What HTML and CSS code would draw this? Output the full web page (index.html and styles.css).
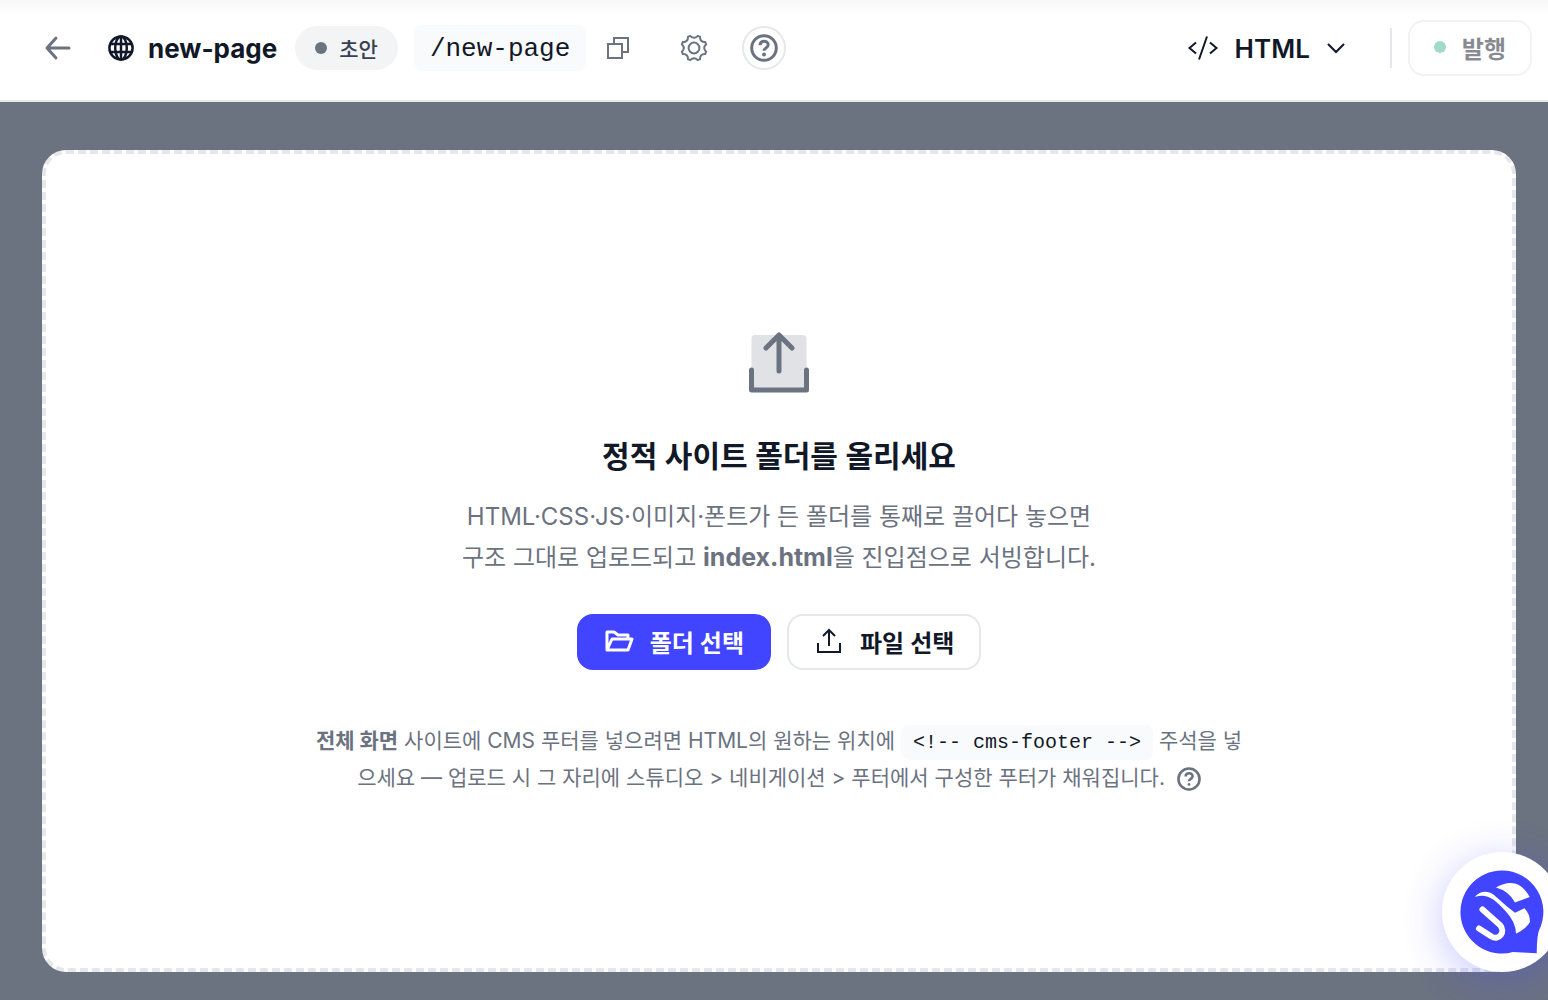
FILE: index.html
```html
<!DOCTYPE html>
<html lang="ko">
<head>
  <meta charset="UTF-8" />
  <meta name="viewport" content="width=device-width, initial-scale=1.0"/>
  <title>new-page</title>
  <link rel="stylesheet" href="styles.css">
</head>
<body>

  <header class="topbar">
    <a class="back" href="#" aria-label="뒤로">
      <svg width="28" height="28" viewBox="0 0 28 28"><path d="M25 14H3M12 4L3 14l9 10"/></svg>
    </a>

    <h1 class="page-title">
      <svg width="26" height="26" viewBox="0 0 26 26"><circle cx="13" cy="13" r="11.6"/><ellipse cx="13" cy="13" rx="5.8" ry="11.6"/><path d="M2.5 9h21M2.5 17h21M13 1v24"/></svg>
      new-page
    </h1>

    <span class="badge"><i class="dot"></i>초안</span>
    <code class="slug">/new-page</code>

    <button class="icon-btn copy" type="button" aria-label="주소 복사">
      <svg width="24" height="24" viewBox="0 0 24 24"><path d="M2 8h14v14H2zM8 8V2h14v14h-6"/></svg>
    </button>
    <button class="icon-btn settings" type="button" aria-label="설정">
      <svg width="28" height="28" viewBox="0 0 28 28"><circle cx="14" cy="14" r="5.4"/><path d="M10.2 1.900Q14 5.700 17.800 1.900L20 2.800Q19.800 8.200 25.200 8L26.100 10.200Q22.300 14 26.100 17.800L25.200 20Q19.800 19.800 20 25.200L17.800 26.100Q14 22.300 10.200 26.100L8 25.200Q8.200 19.800 2.800 20L1.900 17.800Q5.700 14 1.900 10.200L2.800 8Q8.200 8.200 8 2.800z"/></svg>
    </button>
    <button class="icon-btn help" type="button" aria-label="도움말">
      <svg width="28" height="28" viewBox="0 0 28 28"><circle cx="14" cy="14" r="12.3"/><path d="M10 11.2c0-5.3 8.2-5.1 8.2-.4 0 3.2-4.2 3-4.2 5.9"/><circle class="fill" cx="14" cy="20.4" r="2"/></svg>
    </button>

    <button class="mode" type="button">
      <svg width="32" height="28" viewBox="0 0 32 28"><path d="M9 8.5L2.500 14 9 19.500M23 8.500l6.500 5.500-6.500 5.500M20 2.500l-8 23"/></svg>
      HTML
      <svg width="20" height="20" viewBox="0 0 20 20"><path d="M2 6l8 8 8-8"/></svg>
    </button>
    <span class="divider"></span>
    <button class="publish" type="button" disabled><i class="dot"></i>발행</button>
  </header>

  <main class="stage">
    <section class="dropzone">
      <svg class="upload" width="64" height="64" viewBox="0 0 64 64">
        <rect x="4.500" y="5" width="55" height="56" rx="4"/>
        <path d="M32 41V6M19 18L32 5l13 13M4.500 40v20h55V40"/>
      </svg>
      <h2>정적 사이트 폴더를 올리세요</h2>
      <p class="lead">HTML·CSS·JS·이미지·폰트가 든 폴더를 통째로 끌어다 놓으면<br>구조 그대로 업로드되고 <strong>index.html</strong>을 진입점으로 서빙합니다.</p>

      <div class="actions">
        <button class="btn primary" type="button">
          <svg width="30" height="24" viewBox="0 0 30 24"><path d="M3 21V3h7l4 3h10v4M3 21L8 10h20l-4 11z"/></svg>
          폴더 선택
        </button>
        <button class="btn" type="button">
          <svg width="30" height="28" viewBox="0 0 30 28"><path d="M15 19V3M9 9l6-6 6 6M4 16v9h22v-9"/></svg>
          파일 선택
        </button>
      </div>

      <p class="note">
        <strong>전체 화면</strong> 사이트에 CMS 푸터를 넣으려면 HTML의 원하는 위치에 <code>&lt;!-- cms-footer --&gt;</code> 주석을 넣으세요 — 업로드 시 그 자리에 스튜디오 &gt; 네비게이션 &gt; 푸터에서 구성한 푸터가 채워집니다.
        <button class="note-help" type="button" aria-label="푸터 도움말">
          <svg width="24" height="24" viewBox="0 0 28 28"><circle cx="14" cy="14" r="12.300"/><path d="M10 11.200c0-5.300 8.200-5.100 8.200-.4 0 3.200-4.200 3-4.200 5.900"/><circle class="fill" cx="14" cy="20.400" r="1.600"/></svg>
        </button>
      </p>
    </section>
  </main>

  <button class="chat" type="button" aria-label="채팅 문의">
    <svg width="120" height="120" viewBox="0 0 120 120">
      <path class="bubble" d="M60 18.500a41.500 41.500 0 0 1 37 60q-2 4-2.300 22.800L71 100A41.500 41.500 0 1 1 60 18.500z"/>
      <path class="mark" d="M54 35.500C67 28 79 29 87.700 45L73 50.500Q67 39 54 35.500z"/>
      <path class="mark" d="M33 45C38 38.500 46 38.500 52 43L65 54.500 73 60.700l9.500-4.500Q88 62 88 70 84 77 74 81.700 74 70 63 58.500C52 46 44 41 33 45z"/>
      <path class="hook" d="M40.500 57.500L58 73c6 7-1 16-8.500 11.500L37 76.500"/>
    </svg>
  </button>

</body>
</html>
```
FILE: styles.css
```css
* {
  box-sizing: border-box;
}
body {
  margin: 0;
  min-height: 100vh;
  display: flex;
  flex-direction: column;
  overflow: hidden;
  font-family: Inter, "Noto Sans CJK KR", sans-serif;
  background: #6b7280;
  color: #111827;
}
button {
  font: inherit;
  color: inherit;
  background: none;
  border: 0;
  padding: 0;
  cursor: pointer;
}
svg {
  display: block;
  flex: none;
  fill: none;
  stroke: currentColor;
  stroke-width: 2;
}
svg .fill {
  fill: currentColor;
  stroke: none;
}
code {
  font-family: "Liberation Mono", monospace;
  color: #111827;
  background: #f9fafb;
  border-radius: 8px;
}

.topbar {
  display: flex;
  align-items: center;
  height: 102px;
  padding: 0 16px 4px 44px;
  background: linear-gradient(#f7f7f7, #fff 14px);
  border-bottom: 2px solid #e5e7eb;
}
.back {
  color: #6b7280;
  margin-right: 36px;
}
.back svg {
  stroke-width: 3;
  stroke-linecap: round;
  stroke-linejoin: round;
}
.page-title {
  display: flex;
  align-items: center;
  gap: 14px;
  margin: 0 18px 0 0;
  font-size: 26px;
  font-weight: 700;
}
.page-title svg {
  stroke-width: 2.5;
}
.badge {
  display: flex;
  align-items: center;
  gap: 12px;
  height: 44px;
  padding: 0 20px;
  margin-right: 16px;
  border-radius: 22px;
  background: #f3f4f6;
  color: #374151;
  font-size: 21px;
  font-weight: 500;
}
.dot {
  width: 12px;
  height: 12px;
  border-radius: 50%;
  background: #6b7280;
}
.slug {
  padding: 2px 16px 0;
  font-size: 26px;
  line-height: 44px;
}
.icon-btn {
  display: flex;
  align-items: center;
  justify-content: center;
  width: 44px;
  height: 44px;
  color: #6b7280;
}
.copy {
  margin-left: 10px;
}
.settings {
  margin-left: 32px;
}
.help {
  margin-left: 26px;
  border: 2px solid #e5e7eb;
  border-radius: 50%;
}
.help svg {
  stroke-width: 3;
}
.mode {
  display: flex;
  align-items: center;
  gap: 16px;
  margin-left: auto;
  font-size: 26px;
  font-weight: 600;
}
.divider {
  width: 2px;
  height: 40px;
  margin: 0 16px 0 44px;
  background: #e5e7eb;
}
.publish {
  display: flex;
  align-items: center;
  gap: 16px;
  height: 56px;
  padding: 0 24px 2px;
  border: 2px solid #e5e7eb;
  border-radius: 16px;
  font-size: 24px;
  font-weight: 600;
  opacity: 0.5;
}
.publish .dot {
  background: #45b98a;
}

.stage {
  flex: 1;
  display: flex;
  padding: 48px 32px 28px 42px;
}
.dropzone {
  flex: 1;
  display: flex;
  flex-direction: column;
  align-items: center;
  justify-content: center;
  padding-top: 4px;
  border: 4px dashed #e5e7eb;
  border-radius: 24px;
  background: #fff;
  color: #6b7280;
  text-align: center;
}
.upload {
  stroke-width: 5;
  stroke-linecap: round;
  stroke-linejoin: round;
}
.upload rect {
  fill: #e1e2e6;
  stroke: none;
}
.dropzone h2 {
  margin: 38px 0 16px;
  font-size: 30px;
  line-height: 48px;
  font-weight: 600;
  color: #111827;
}
.lead {
  margin: 0;
  font-size: 24px;
  line-height: 41px;
}
.lead strong {
  font-size: 25px;
  font-weight: 700;
}
.actions {
  display: flex;
  gap: 16px;
  margin: 36px 0 52px;
}
.btn {
  display: flex;
  align-items: center;
  gap: 16px;
  height: 56px;
  padding: 0 25px 2px;
  border: 2px solid #e5e7eb;
  border-radius: 16px;
  background: #fff;
  color: #111827;
  font-size: 24px;
  font-weight: 600;
}
.btn.primary {
  border-color: #4245ff;
  background: #4245ff;
  color: #fff;
}
.btn.primary svg {
  stroke-width: 3;
  stroke-linejoin: round;
}
.note {
  max-width: 930px;
  margin: 0;
  font-size: 21px;
  line-height: 37px;
}
.note code {
  padding: 6px 12px;
  font-size: 20px;
  line-height: 20px;
}
.note-help {
  margin-left: 6px;
  line-height: 20px;
  vertical-align: middle;
}
.note-help svg {
  stroke-width: 3;
}

.chat {
  position: fixed;
  right: -14px;
  bottom: 28px;
  width: 120px;
  height: 120px;
  border-radius: 50%;
  background: #fff;
  box-shadow: 0 8px 40px rgba(66, 69, 255, 0.3);
}
.chat svg {
  stroke: none;
}
.bubble {
  fill: #4245ff;
}
.mark {
  fill: #fff;
}
.chat .hook {
  stroke: #fff;
  stroke-width: 6;
  stroke-linecap: round;
}
```
